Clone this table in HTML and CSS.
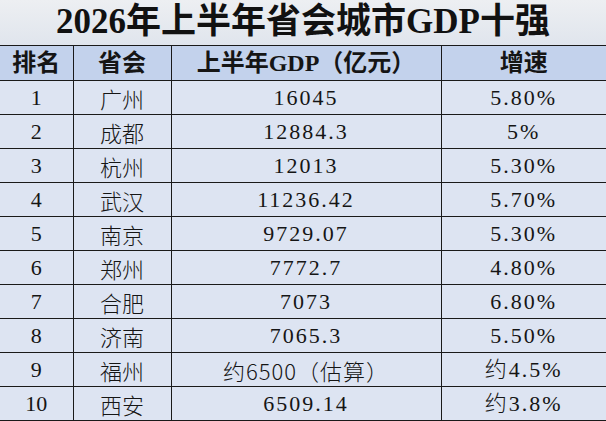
FILE: index.html
```html
<!DOCTYPE html>
<html lang="zh-CN">
<head>
<meta charset="utf-8">
<title>2026年上半年省会城市GDP十强</title>
<link rel="stylesheet" href="styles.css">
</head>
<body>
<div class="sheet">
  <div class="title">2026年上半年省会城市GDP十强</div>
  <table class="grid">
    <colgroup>
      <col class="c-rank"><col class="c-city"><col class="c-gdp"><col class="c-rate">
    </colgroup>
    <thead>
      <tr><th>排名</th><th>省会</th><th>上半年GDP（亿元）</th><th>增速</th></tr>
    </thead>
    <tbody>
      <tr><td class="rank">1</td><td class="city">广州</td><td class="num">16045</td><td class="num">5.80%</td></tr>
      <tr><td class="rank">2</td><td class="city">成都</td><td class="num">12884.3</td><td class="num">5%</td></tr>
      <tr><td class="rank">3</td><td class="city">杭州</td><td class="num">12013</td><td class="num">5.30%</td></tr>
      <tr><td class="rank">4</td><td class="city">武汉</td><td class="num">11236.42</td><td class="num">5.70%</td></tr>
      <tr><td class="rank">5</td><td class="city">南京</td><td class="num">9729.07</td><td class="num">5.30%</td></tr>
      <tr><td class="rank">6</td><td class="city">郑州</td><td class="num">7772.7</td><td class="num">4.80%</td></tr>
      <tr><td class="rank">7</td><td class="city">合肥</td><td class="num">7073</td><td class="num">6.80%</td></tr>
      <tr><td class="rank">8</td><td class="city">济南</td><td class="num">7065.3</td><td class="num">5.50%</td></tr>
      <tr><td class="rank">9</td><td class="city">福州</td><td class="est">约6500（估算）</td><td class="num">约4.5%</td></tr>
      <tr><td class="rank">10</td><td class="city">西安</td><td class="num">6509.14</td><td class="num">约3.8%</td></tr>
    </tbody>
  </table>
</div>
</body>
</html>
```

FILE: styles.css
```css
html, body {
  margin: 0;
  padding: 0;
  background: #dde4f2;
}

.sheet {
  width: 606px;
  height: 421px;
  overflow: hidden;
  background: #dde4f2;
}

.title {
  height: 45px;
  line-height: 44px;
  text-align: center;
  font-family: "Liberation Serif", "Noto Sans CJK SC", serif;
  font-weight: bold;
  font-size: 35px;
  color: #111;
  background: linear-gradient(#edeff2, #e0e5ed);
}

.grid {
  width: 606px;
  table-layout: fixed;
  border-collapse: collapse;
  color: #151515;
}

.c-rank { width: 73px; }
.c-city { width: 98px; }
.c-gdp { width: 270px; }
.c-rate { width: 165px; }

.grid th,
.grid td {
  border: 1px solid #1a1a1a;
  padding: 0;
  text-align: center;
  vertical-align: middle;
  white-space: nowrap;
  overflow: hidden;
  line-height: 28px;
}

.grid tr > :first-child { border-left: none; }
.grid tr > :last-child { border-right: none; }

.grid thead tr { height: 35px; }
.grid tbody tr { height: 34px; }

.grid th {
  background: #c3d2ec;
  font-family: "Liberation Serif", "Noto Sans CJK SC", serif;
  font-weight: bold;
  font-size: 24px;
}

.grid td {
  background: #dde4f2;
  font-size: 22px;
}

.rank {
  font-family: "Liberation Serif", "Noto Sans CJK SC", serif;
  font-size: 23px;
}

.city {
  font-family: "Noto Sans CJK SC", sans-serif;
  font-weight: 300;
  font-size: 24px;
}

.num {
  font-family: "Liberation Serif", "Noto Sans CJK SC", serif;
  font-weight: 300;
  font-size: 23px;
  letter-spacing: 2px;
}

.est {
  font-family: "Noto Sans CJK SC", sans-serif;
  font-weight: 300;
  font-size: 24px;
  letter-spacing: 1px;
}
```
